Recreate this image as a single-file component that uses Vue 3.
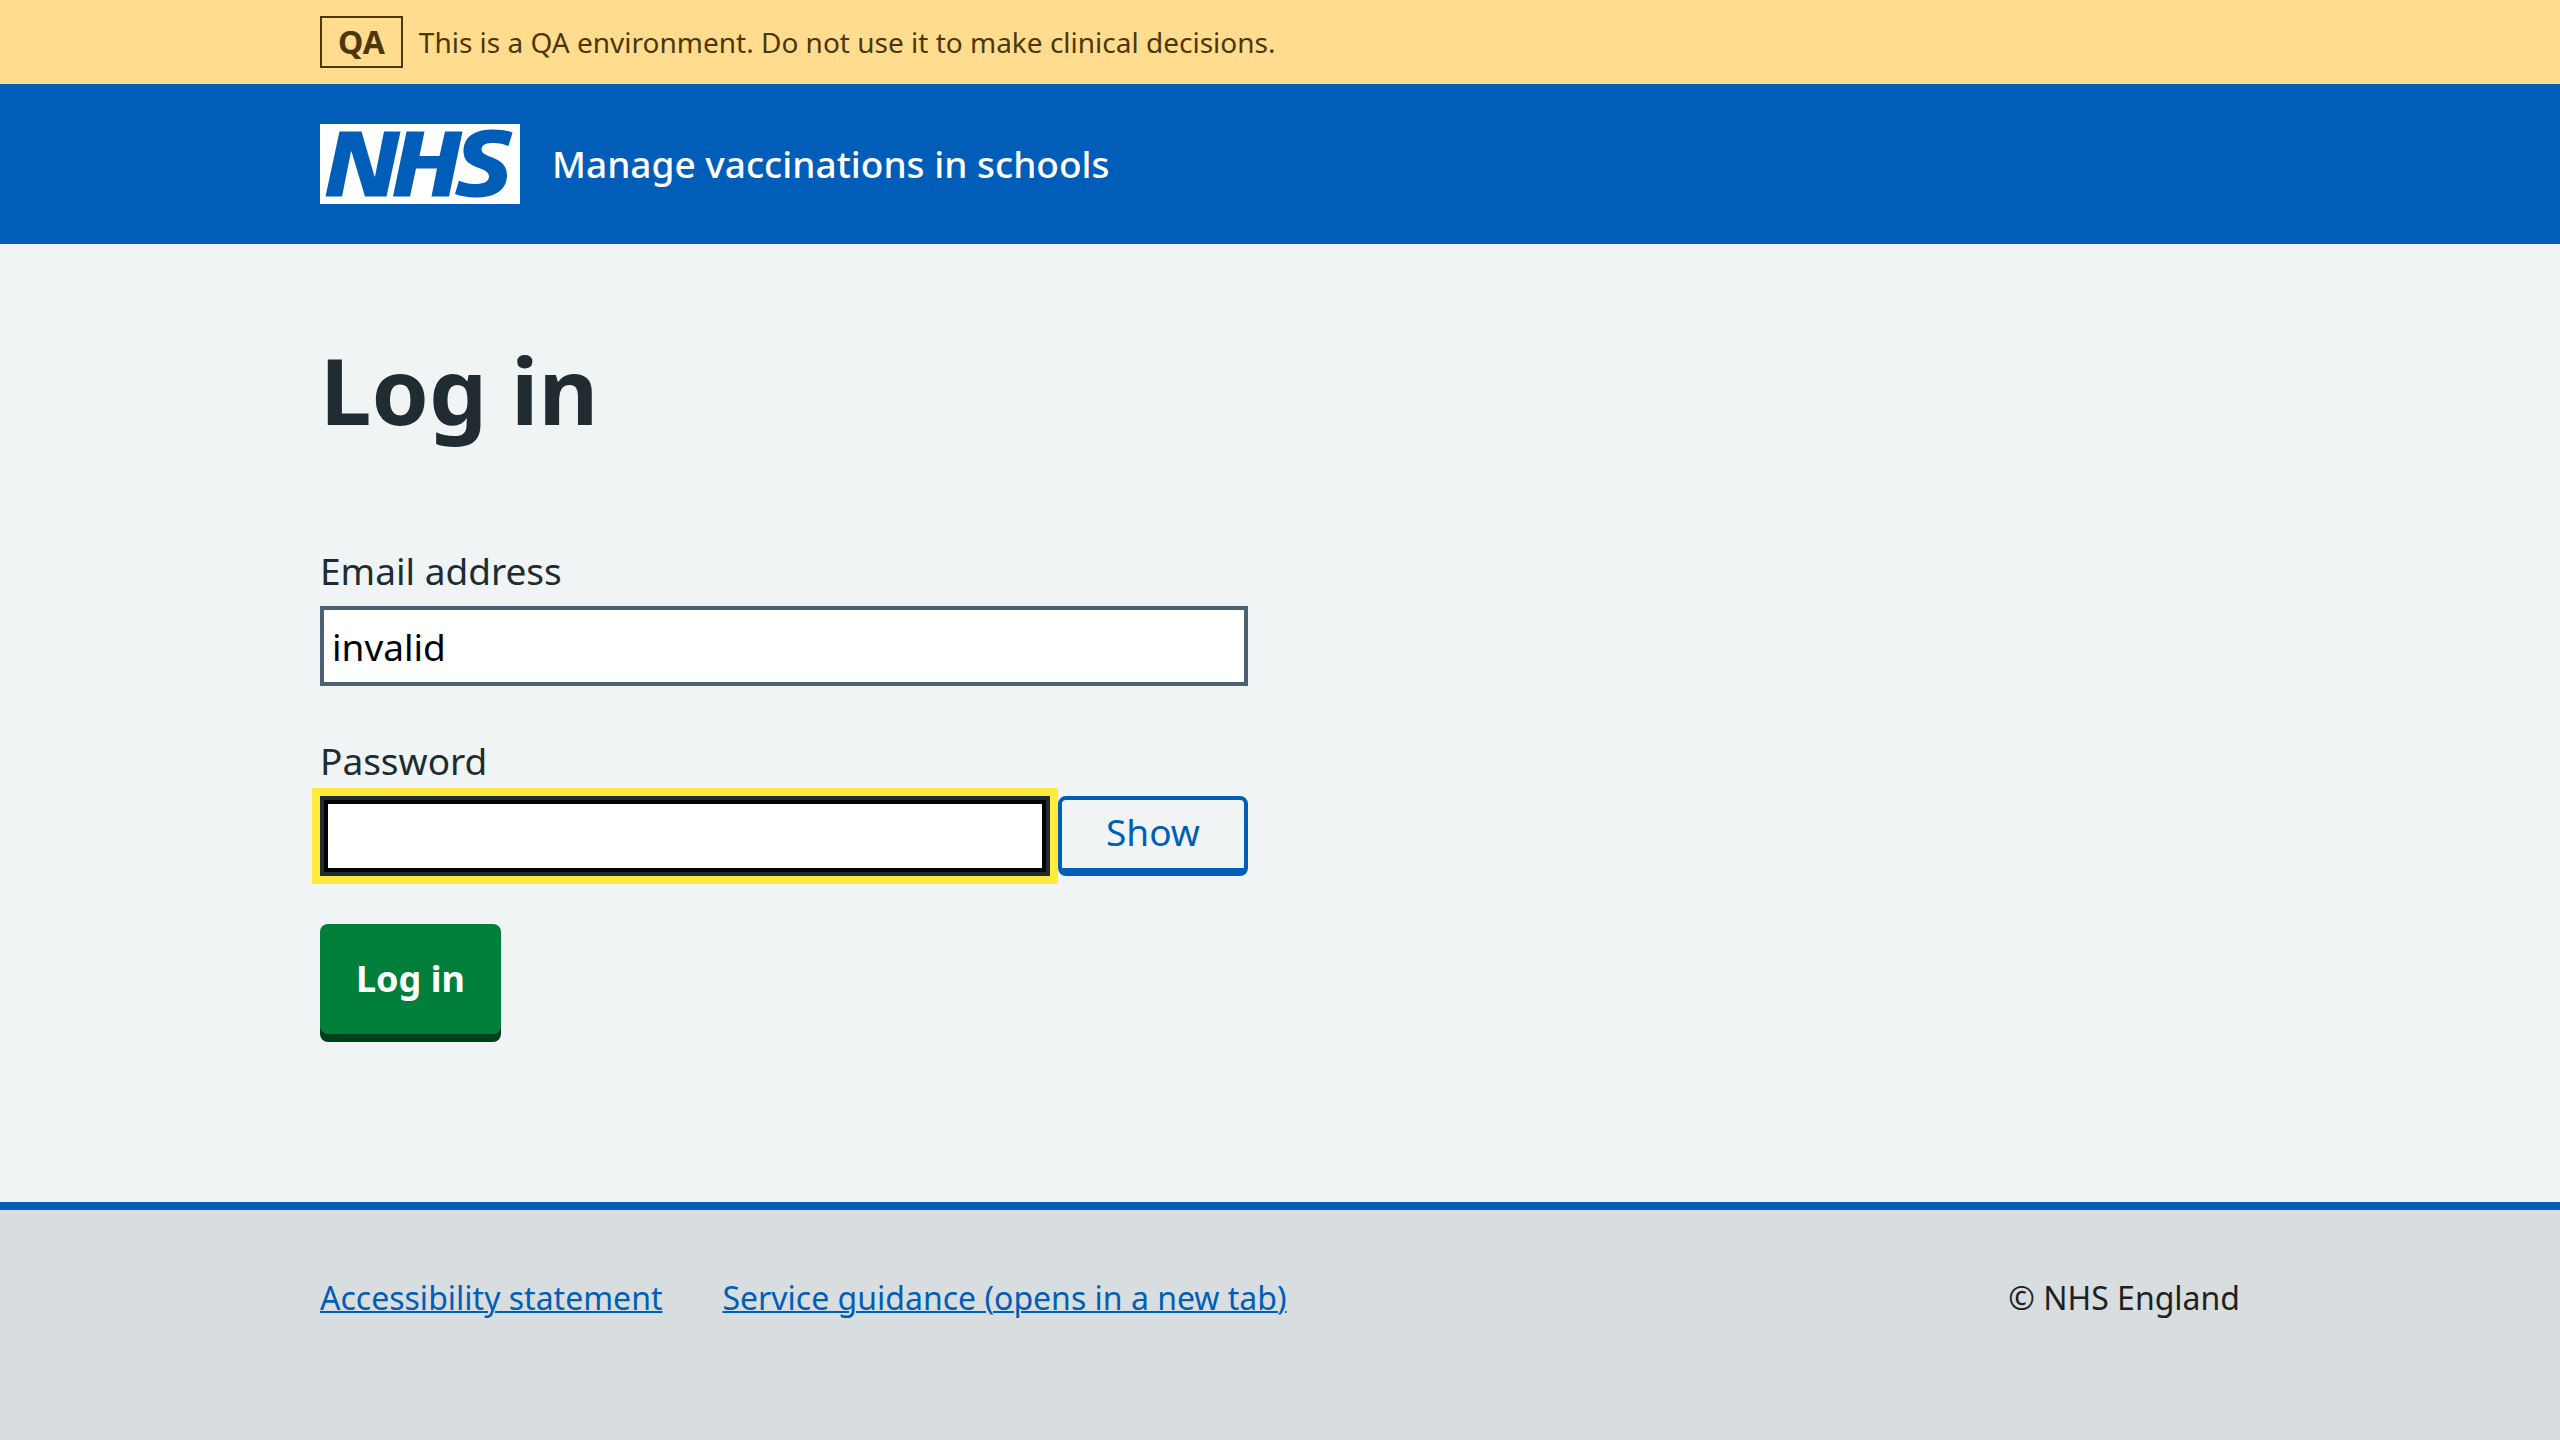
<script setup>
import { ref } from 'vue'

const email = ref('invalid')
const password = ref('')
const passwordShown = ref(false)

const footerLinks = [
  { text: 'Accessibility statement', href: '#accessibility' },
  { text: 'Service guidance (opens in a new tab)', href: '#guidance' },
]
</script>

<template>
  <div class="page">
    <div class="environment">
      <div class="container environment-inner">
        <strong class="tag">QA</strong>
        <span>This is a QA environment. Do not use it to make clinical decisions.</span>
      </div>
    </div>

    <header class="header">
      <div class="container">
        <a class="service" href="#home">
          <svg class="logo" viewBox="0 0 200 80" role="img" aria-label="NHS">
            <path
              fill="#fff"
              d="M200 0v80H0V0h200Zm-27.5 5.5c-14.5 0-29 5-29 22 0 10.2 7.7 13.5 14.7 16.3l.7.3c5.4 2 10.1 3.9 10.1 8.4 0 6.5-8.5 7.5-14 7.5s-12.5-1.5-16-3.5L135 70c5.5 2 13.5 3.5 20 3.5 15.5 0 32-4.5 32-22.5 0-19.5-25.5-16.5-25.5-25.5 0-5.5 5.5-6.5 12.5-6.5a35 35 0 0 1 14.5 3l4-13.5c-4.5-2-12-3-20-3Zm-131 2h-22l-14 65H22l9-45h.5l13.5 45h21.5l14-65H64l-9 45h-.5l-13-45Zm63 0h-18l-13.5 65h17l6-28H117l-5.5 28H129l13.5-65H125L119.5 32h-20l5-24.5Z"
            />
          </svg>
          <span>Manage vaccinations in schools</span>
        </a>
      </div>
    </header>

    <main class="container main">
      <h1>Log in</h1>
      <form class="form" @submit.prevent>
        <div class="field">
          <label for="email">Email address</label>
          <input id="email" v-model="email" class="input" type="text" autocomplete="off" />
        </div>
        <div class="field">
          <label for="password">Password</label>
          <div class="password">
            <input
              id="password"
              v-model="password"
              class="input focused"
              :type="passwordShown ? 'text' : 'password'"
              autocomplete="off"
            />
            <button class="toggle" type="button" @click="passwordShown = !passwordShown">
              {{ passwordShown ? 'Hide' : 'Show' }}
            </button>
          </div>
        </div>
        <button class="submit" type="submit">Log in</button>
      </form>
    </main>

    <footer class="footer">
      <div class="container footer-inner">
        <nav class="footer-links">
          <a v-for="link in footerLinks" :key="link.href" :href="link.href">{{ link.text }}</a>
        </nav>
        <p>© NHS England</p>
      </div>
    </footer>
  </div>
</template>

<style>
body {
  margin: 0;
  background: #d8dde0;
}
</style>

<style scoped>
.page {
  display: flex;
  flex-direction: column;
  min-height: 100vh;
  background: #f0f4f5;
  color: #212b32;
  font-family: "Noto Sans", "Open Sans", sans-serif;
  font-size: 37px;
  line-height: 54px;
}

.container {
  box-sizing: border-box;
  width: calc(100% - 64px);
  max-width: 1920px;
  margin: 0 auto;
}

.environment {
  padding: 16px 0;
  background: #ffdc8e;
  color: #4d3708;
  font-size: 28px;
  line-height: 48px;
}

.environment-inner {
  display: flex;
  align-items: center;
  gap: 16px;
}

.tag {
  padding: 0 16px;
  border: 2px solid currentColor;
  font-size: 32px;
}

.header {
  padding: 40px 0;
  background: #005eb8;
}

.service {
  display: inline-flex;
  align-items: center;
  gap: 32px;
  color: #fff;
  font-weight: 500;
  text-decoration: none;
  vertical-align: top;
}

.logo {
  display: block;
  flex: none;
  width: 200px;
  height: 80px;
}

.main {
  padding: 96px 0 168px;
}

h1 {
  margin: 0 0 104px;
  font-size: 92px;
  font-weight: 700;
  line-height: 100px;
}

.form {
  max-width: 928px;
}

.field {
  margin-bottom: 48px;
}

label {
  display: block;
  margin-bottom: 8px;
}

.input {
  display: block;
  box-sizing: border-box;
  width: 100%;
  height: 80px;
  padding: 0 8px;
  border: 4px solid #4c6272;
  border-radius: 0;
  background: #fff;
  color: #000;
  font: inherit;
}

.focused {
  border-color: #212b32;
  box-shadow: inset 0 0 0 4px #000;
  outline: 8px solid #ffeb3b;
}

.password {
  display: flex;
  gap: 8px;
}

.password .input {
  flex: 1;
  min-width: 0;
}

.toggle {
  box-sizing: border-box;
  width: 190px;
  padding: 0 0 4px;
  border: 4px solid #005eb8;
  border-bottom-width: 8px;
  border-radius: 8px;
  background: transparent;
  color: #005eb8;
  font: inherit;
}

.submit {
  display: block;
  padding: 28px 36px;
  border: 0;
  border-radius: 8px;
  background: #007f3b;
  box-shadow: 0 8px 0 #00401e;
  color: #fff;
  font: inherit;
  font-size: 36px;
  font-weight: 700;
}

.footer {
  flex: 1;
  padding: 64px 0;
  border-top: 8px solid #005eb8;
  background: #d8dde0;
  font-size: 32px;
  line-height: 48px;
}

.footer-inner {
  display: flex;
  flex-wrap: wrap;
  justify-content: space-between;
}

.footer-links {
  display: flex;
  flex-wrap: wrap;
  gap: 0 60px;
}

.footer a {
  color: #005eb8;
  text-decoration-thickness: 2px;
}

.footer p {
  margin: 0;
  color: #231f20;
}
</style>
